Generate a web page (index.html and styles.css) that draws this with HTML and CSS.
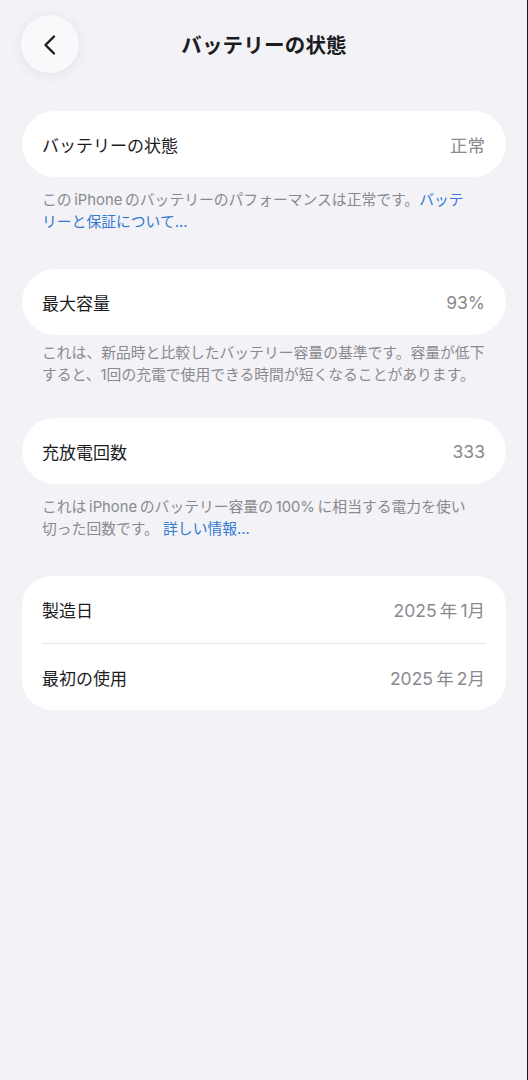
FILE: index.html
```html
<!DOCTYPE html>
<html lang="ja">
<head>
    <meta charset="UTF-8">
    <meta name="viewport" content="width=device-width, initial-scale=1.0">
    <title>バッテリーの状態</title>
    <link rel="stylesheet" href="styles.css">
</head>
<body>

    <header class="nav-bar">
        <button class="back-button" aria-label="戻る">
            <svg width="24" height="24" viewBox="0 0 24 24">
                <path d="M16 3.5 L7.5 12 L16 20.5" fill="none" stroke="#1c1c1e" stroke-width="2.4" stroke-linecap="round" stroke-linejoin="round"/>
            </svg>
        </button>
        <h1 class="nav-title">バッテリーの状態</h1>
    </header>

    <main class="settings">

        <section class="group">
            <div class="card">
                <div class="row">
                    <span class="row-label">バッテリーの状態</span>
                    <span class="row-value">正常</span>
                </div>
            </div>
            <p class="footnote">この&#8201;iPhone&#8201;のバッテリーのパフォーマンスは正常です。<a href="#" class="link">バッテ<br>リーと保証について...</a></p>
        </section>

        <section class="group group-tight">
            <div class="card">
                <div class="row">
                    <span class="row-label">最大容量</span>
                    <span class="row-value">93%</span>
                </div>
            </div>
            <p class="footnote">これは、新品時と比較したバッテリー容量の基準です。容量が低下<br>すると、1回の充電で使用できる時間が短くなることがあります。</p>
        </section>

        <section class="group">
            <div class="card">
                <div class="row">
                    <span class="row-label">充放電回数</span>
                    <span class="row-value">333</span>
                </div>
            </div>
            <p class="footnote">これは&#8201;iPhone&#8201;のバッテリー容量の&#8201;100%&#8201;に相当する電力を使い<br>切った回数です。 <a href="#" class="link">詳しい情報...</a></p>
        </section>

        <section class="group">
            <div class="card card-list">
                <div class="row">
                    <span class="row-label">製造日</span>
                    <span class="row-value">2025&#8201;年&#8201;1月</span>
                </div>
                <div class="row">
                    <span class="row-label">最初の使用</span>
                    <span class="row-value">2025&#8201;年&#8201;2月</span>
                </div>
            </div>
        </section>

    </main>

</body>
</html>
```

FILE: styles.css
```css
body {
    font-family: 'Inter', 'Noto Sans CJK JP', sans-serif;
    background: #f2f2f7;
    color: #1c1c1e;
    margin: 0;
    padding: 0;
    min-height: 100vh;
    box-shadow: inset -1px 0 0 #1c1c1e; /* window edge */
}

/* Top bar */
.nav-bar {
    display: grid;
    grid-template-columns: 58px 1fr 58px;
    align-items: center;
    padding: 15px 21px 0;
}
.back-button {
    width: 58px;
    height: 58px;
    border: none;
    border-radius: 50%;
    background: #f9f9fb;
    box-shadow: 0 2px 14px rgba(0, 0, 0, 0.07);
    display: flex;
    justify-content: center;
    align-items: center;
    padding: 0;
    cursor: pointer;
}
.back-button svg {
    margin: 2px 0 0 -1px;
}
.nav-title {
    margin: 0;
    text-align: center;
    font-size: 20.5px;
    font-weight: bold;
    letter-spacing: 0.2px;
}

/* Groups */
.settings {
    padding: 38px 22px 0;
}
.group {
    margin-bottom: 36px;
}
.card {
    background: #fff;
    border-radius: 33px;
}
.card-list {
    border-radius: 30px;
}
.row {
    display: flex;
    justify-content: space-between;
    align-items: center;
    height: 66px;
    padding: 0 21px 0 20px;
}
.card-list .row {
    height: 67px;
}
.card-list .row + .row {
    border-top: 1px solid #e4e4e8;
    margin: 0 20px;
    padding: 0 1px 0 0;
    height: 66px;
}
.row-label {
    font-size: 17px;
    color: #1c1c1e;
}
.row-value {
    font-size: 17.5px;
    color: #8a8a8e;
}

/* Notes below a card */
.footnote {
    margin: 0;
    padding: 12px 8px 0 20px;
    font-size: 14.8px;
    line-height: 22px;
    color: #8a8a8e;
    white-space: nowrap;
}
.group-tight {
    margin-bottom: 32px;
}
.group-tight .footnote {
    padding-top: 7px;
}
.link {
    color: #3479d2;
    text-decoration: none;
}
```
